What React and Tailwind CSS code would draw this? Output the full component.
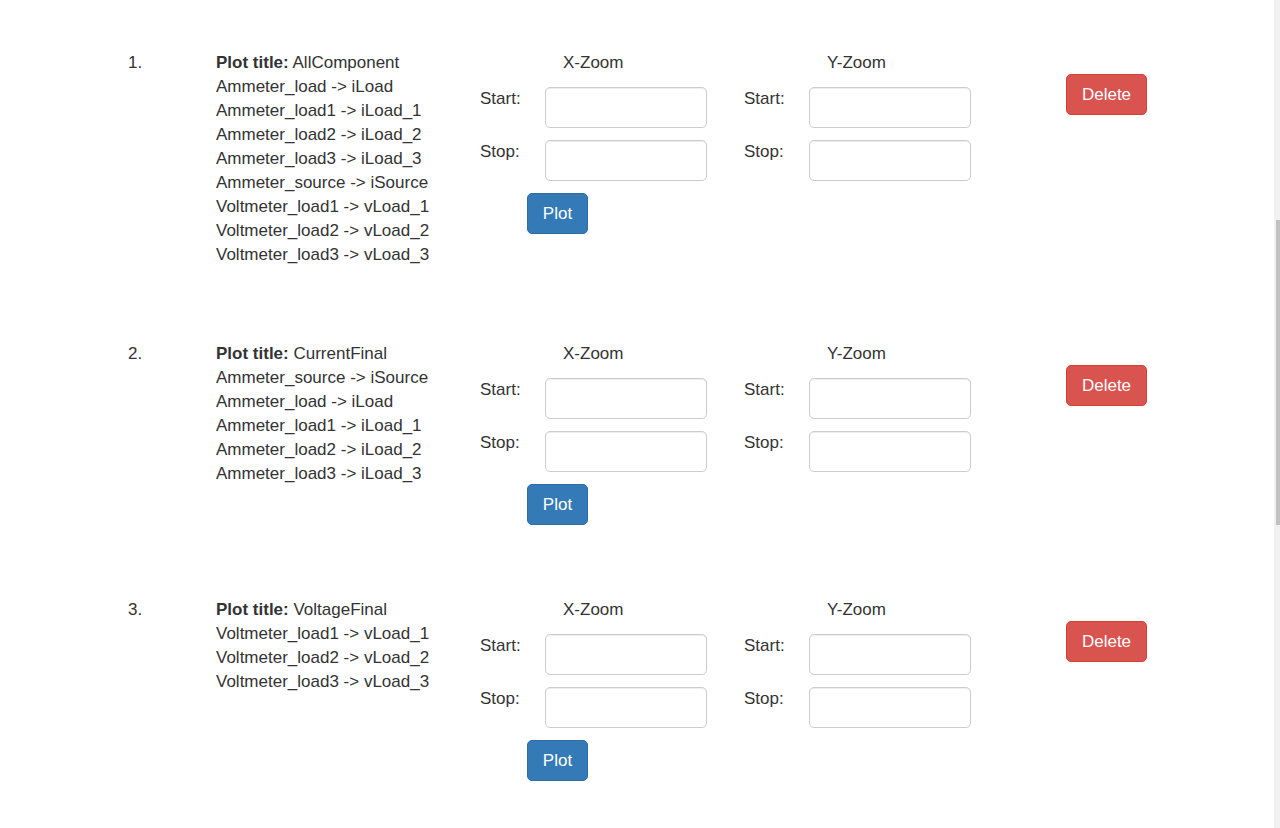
import React from 'react';

const plots = [
  {
    title: 'AllComponent',
    lines: [
      'Ammeter_load -> iLoad',
      'Ammeter_load1 -> iLoad_1',
      'Ammeter_load2 -> iLoad_2',
      'Ammeter_load3 -> iLoad_3',
      'Ammeter_source -> iSource',
      'Voltmeter_load1 -> vLoad_1',
      'Voltmeter_load2 -> vLoad_2',
      'Voltmeter_load3 -> vLoad_3',
    ],
  },
  {
    title: 'CurrentFinal',
    lines: [
      'Ammeter_source -> iSource',
      'Ammeter_load -> iLoad',
      'Ammeter_load1 -> iLoad_1',
      'Ammeter_load2 -> iLoad_2',
      'Ammeter_load3 -> iLoad_3',
    ],
  },
  {
    title: 'VoltageFinal',
    lines: [
      'Voltmeter_load1 -> vLoad_1',
      'Voltmeter_load2 -> vLoad_2',
      'Voltmeter_load3 -> vLoad_3',
    ],
  },
];

function ZoomInput({ label }) {
  return (
    <div className="flex items-start">
      <label className="w-[65px] shrink-0">{label}</label>
      <input
        type="text"
        className="w-[162px] h-[41px] rounded-[5px] border border-[#ccc] bg-white shadow-[inset_0_1px_1px_rgba(0,0,0,0.075)] outline-none px-3"
      />
    </div>
  );
}

function ZoomGroup({ name, withButton, className }) {
  return (
    <div className={className}>
      <div className="pl-[83px] mb-[12px]">{name}</div>
      <div className="flex flex-col gap-[12px]">
        <ZoomInput label="Start:" />
        <ZoomInput label="Stop:" />
      </div>
      {withButton && (
        <button className="ml-[47px] mt-[12px] h-[41px] w-[61px] rounded-[5px] border border-[#2e6da4] bg-[#337ab7] text-white">
          Plot
        </button>
      )}
    </div>
  );
}

function PlotRow({ index, plot }) {
  return (
    <div className="flex items-start mb-[65px]">
      <div className="w-[88px] shrink-0">{index}.</div>
      <div className="w-[264px] shrink-0 pb-[10px]">
        <div>
          <b className="font-bold">Plot title:</b> {plot.title}
        </div>
        {plot.lines.map((l, i) => (
          <div key={i}>{l}</div>
        ))}
      </div>
      <div className="flex pb-[8px]">
        <ZoomGroup name="X-Zoom" withButton className="w-[264px] shrink-0" />
        <ZoomGroup name="Y-Zoom" className="w-[322px] shrink-0" />
      </div>
      <button className="mt-[23px] h-[41px] w-[81px] rounded-[5px] border border-[#d43f3a] bg-[#d9534f] text-white">
        Delete
      </button>
    </div>
  );
}

export default function App() {
  return (
    <div className="relative h-[828px] overflow-hidden bg-white text-[#333] text-[17px] leading-[24px] font-['Liberation_Sans',Arial,sans-serif]">
      <div className="pt-[51px] pl-[128px]">
        {plots.map((p, i) => (
          <PlotRow key={i} index={i + 1} plot={p} />
        ))}
      </div>

      {/* scrollbar */}
      <div className="absolute top-0 right-0 h-full w-[6px] bg-[#f1f1f1]">
        <div className="absolute top-[220px] right-0 h-[305px] w-[4px] bg-[#c1c1c1]" />
      </div>
    </div>
  );
}
